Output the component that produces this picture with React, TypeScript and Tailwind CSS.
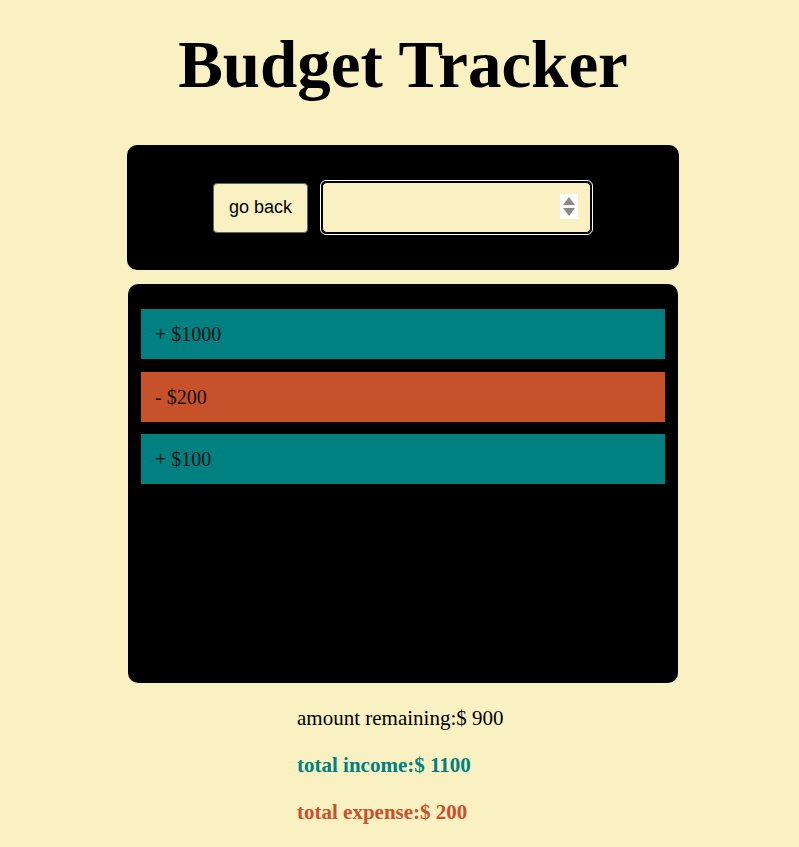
import { useState } from 'react';

interface Entry {
  id: number;
  type: 'income' | 'expense';
  amount: number;
}

const entries: Entry[] = [
  { id: 1, type: 'income', amount: 1000 },
  { id: 2, type: 'expense', amount: 200 },
  { id: 3, type: 'income', amount: 100 },
];

export default function App() {
  const [value, setValue] = useState('');

  const income = entries.filter((e) => e.type === 'income').reduce((s, e) => s + e.amount, 0);
  const expense = entries.filter((e) => e.type === 'expense').reduce((s, e) => s + e.amount, 0);

  return (
    <div className="min-h-[847px] bg-[#faf1c3] font-['Liberation_Serif',serif] text-black">
      <h1 className="pl-[7px] pt-[24px] text-center text-[67px] font-bold leading-[80px]">Budget Tracker</h1>

      <div className="ml-[127px] mt-[41px] flex h-[125px] w-[552px] items-center justify-center gap-3 rounded-[10px] bg-black">
        <button className="h-[50px] w-[95px] rounded-[4px] border border-[#666] bg-[#faf1c3] font-['Liberation_Sans',sans-serif] text-[18px] text-black">
          go back
        </button>
        <div className="relative rounded-[6px] border border-white p-px">
          <input
            type="number"
            value={value}
            onChange={(e) => setValue(e.target.value)}
            className="h-[51px] w-[269px] appearance-none rounded-[5px] border border-black bg-[#faf1c3] px-2 font-['Liberation_Sans',sans-serif] text-[18px] outline-none [&::-webkit-inner-spin-button]:appearance-none [&::-webkit-outer-spin-button]:appearance-none"
          />
          {/* spinner */}
          <div className="pointer-events-none absolute right-[14px] top-[13px] flex h-[25px] w-[18px] flex-col items-center justify-center gap-[3px] bg-white">
            <svg width="12" height="8" viewBox="0 0 12 8">
              <path d="M6 0 L12 8 L0 8 Z" fill="#8a8a8a" />
            </svg>
            <svg width="12" height="8" viewBox="0 0 12 8">
              <path d="M0 0 L12 0 L6 8 Z" fill="#8a8a8a" />
            </svg>
          </div>
        </div>
      </div>

      <div className="ml-[128px] mt-[14px] flex h-[399px] w-[550px] flex-col gap-[12.5px] rounded-[10px] bg-black px-[13px] pt-[25px]">
        {entries.map((e) => (
          <div
            key={e.id}
            className={`flex h-[50px] items-center px-[14px] text-[20px] text-[#111] ${
              e.type === 'income' ? 'bg-[#008080]' : 'bg-[#c7522a]'
            }`}
          >
            {e.type === 'income' ? '+' : '-'} ${e.amount}
          </div>
        ))}
      </div>

      <div className="ml-[297px] mt-[22px] flex flex-col gap-[21px] text-[21px] leading-[26px]">
        <p>amount remaining:$ {income - expense}</p>
        <p className="font-bold text-[#008080]">total income:$ {income}</p>
        <p className="font-bold text-[#c7522a]">total expense:$ {expense}</p>
      </div>
    </div>
  );
}
